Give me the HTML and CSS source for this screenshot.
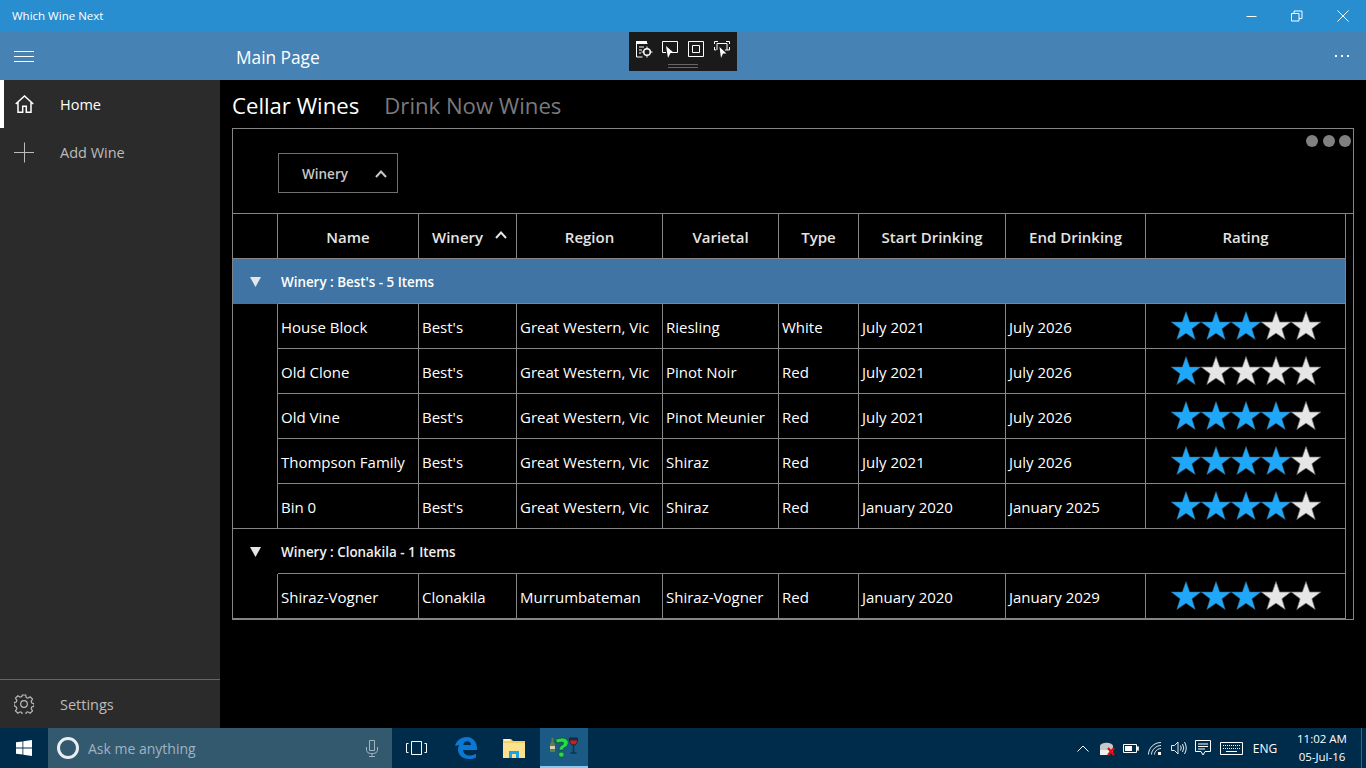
FILE: index.html
```html
<!DOCTYPE html>
<html lang="en">
<head>
<meta charset="utf-8">
<title>Which Wine Next</title>
<link rel="stylesheet" href="styles.css">
</head>
<body>
<svg class="sprite" width="0" height="0" aria-hidden="true">
  <defs>
    <polygon id="star" points="15,0.500 18.700,11 29.800,11 20.900,17.800 24.200,28.500 15,22.200 5.800,28.500 9.100,17.800 0.200,11 11.300,11"/>
    <g id="r1"><use href="#star" class="on"/><use href="#star" class="off" x="30"/><use href="#star" class="off" x="60"/><use href="#star" class="off" x="90"/><use href="#star" class="off" x="120"/></g>
    <g id="r3"><use href="#star" class="on"/><use href="#star" class="on" x="30"/><use href="#star" class="on" x="60"/><use href="#star" class="off" x="90"/><use href="#star" class="off" x="120"/></g>
    <g id="r4"><use href="#star" class="on"/><use href="#star" class="on" x="30"/><use href="#star" class="on" x="60"/><use href="#star" class="on" x="90"/><use href="#star" class="off" x="120"/></g>
  </defs>
</svg>

<div class="titlebar">
  <span class="title">Which Wine Next</span>
  <div class="winctl">
    <span class="wbtn"><svg width="12" height="12" viewBox="0 0 12 12"><path d="M1.500 6.500h10" class="ln"/></svg></span>
    <span class="wbtn"><svg width="12" height="12" viewBox="0 0 12 12"><path d="M.5 3.500h7.500v7.500H.5zM3 3.500V1h8v7.500H8" class="ln"/></svg></span>
    <span class="wbtn"><svg width="12" height="12" viewBox="0 0 12 12"><path d="M.5.5l11 11M11.500.5l-11 11" class="ln"/></svg></span>
  </div>
</div>

<div class="appbar">
  <span class="burger"><svg width="20" height="12" viewBox="0 0 20 12"><path d="M0 1.500h20M0 6.500h20M0 11.500h20" class="ln"/></svg></span>
  <span class="pagetitle">Main Page</span>
  <span class="more"><i></i><i></i><i></i></span>
</div>

<div class="debugbar">
  <div class="dbg-icons">
    <svg width="18" height="18" viewBox="0 0 18 18"><path d="M.5 2.500h11M.5 1v15h6M3 6h5M3 9h3M3 12h2" class="ln"/><path d="M0 0h11v2.500H0z" fill="#fff"/><circle cx="11" cy="11" r="3.300" class="ln w14"/><path d="M11 5.500v3M11 13.500v3M5.500 11h3M13.500 11h3" class="ln"/></svg>
    <svg width="18" height="18" viewBox="0 0 18 18"><path d="M4 11.500H.5V.5h15v11H11" class="ln"/><path d="M4 5l8 7H8.500L6 17z" fill="#fff"/></svg>
    <svg width="18" height="18" viewBox="0 0 18 18"><path d="M.5.5h15v15H.5zM4.500 4.500h7v7h-7z" class="ln"/></svg>
    <svg width="18" height="18" viewBox="0 0 18 18"><path d="M.5 3V.5H4M12 .5h3.500V3M.5 6v3H2M13 9h2.500V6M3 9V2.500h10V9h-2" class="ln"/><path d="M5.500 6l7 6.500H9L7 17z" fill="#fff"/></svg>
  </div>
  <div class="dbg-grip"></div>
</div>

<div class="app">
  <nav class="sidebar">
    <a class="nav-item active">
      <span class="nav-ic"><svg width="19" height="18" viewBox="0 0 19 18"><path d="M.7 9L9.500 1l8.800 8M3 7v10.300h4.700v-6h3.600v6H16V7" class="ln w15"/></svg></span>
      <span>Home</span>
    </a>
    <a class="nav-item dim">
      <span class="nav-ic"><svg width="20" height="21" viewBox="0 0 20 21"><path d="M0 10.500h20M10.500.5v20" class="ln"/></svg></span>
      <span>Add Wine</span>
    </a>
    <a class="nav-item dim settings">
      <span class="nav-ic"><svg width="20" height="20" viewBox="0 0 20 20"><circle cx="10" cy="10" r="3.300" class="ln w12"/><path d="M8.300 1h3.400l.5 2.500 1.700.7 2.200-1.400 2.400 2.400-1.400 2.200.7 1.700 2.200.5v2.800l-2.200.5-.7 1.700 1.400 2.200-2.400 2.400-2.200-1.400-1.700.7-.5 2.300H8.300l-.5-2.300-1.700-.7-2.200 1.400-2.400-2.400 1.400-2.200-.7-1.700L0 11.400V8.600l2.200-.5.7-1.700-1.400-2.200 2.400-2.400 2.200 1.400 1.700-.7z" class="ln w12"/></svg></span>
      <span>Settings</span>
    </a>
  </nav>

  <main class="content">
    <div class="tabs">
      <span class="tab current">Cellar Wines</span>
      <span class="tab">Drink Now Wines</span>
    </div>
    <section class="grid">
      <span class="dots"><i></i><i></i><i></i></span>
      <div class="toolbar">
        <div class="combo"><span>Winery</span><svg width="12" height="8" viewBox="0 0 12 8"><path d="M1 7l5-5.500L11 7" class="ln w2"/></svg></div>
      </div>

      <div class="row head">
        <div class="cell"></div>
        <div class="cell ctr">Name</div>
        <div class="cell sort">Winery<svg width="12" height="8" viewBox="0 0 12 8"><path d="M1 7l5-5.500L11 7" class="ln w2"/></svg></div>
        <div class="cell ctr">Region</div>
        <div class="cell ctr">Varietal</div>
        <div class="cell ctr">Type</div>
        <div class="cell ctr">Start Drinking</div>
        <div class="cell ctr">End Drinking</div>
        <div class="cell ctr">Rating</div>
      </div>

      <div class="group selected">
        <div class="expander"><svg width="11" height="10" viewBox="0 0 11 10"><path d="M0 0h11L5.500 10z"/></svg></div>
        <div class="group-label">Winery : Best's - 5 Items</div>
      </div>
      <div class="row data">
        <div class="cell blank"></div><div class="cell">House Block</div><div class="cell">Best's</div><div class="cell">Great Western, Vic</div><div class="cell">Riesling</div><div class="cell">White</div><div class="cell">July 2021</div><div class="cell">July 2026</div>
        <div class="cell rate"><svg class="stars" viewBox="0 0 150 30"><use href="#r3"/></svg></div>
      </div>
      <div class="row data">
        <div class="cell blank"></div><div class="cell">Old Clone</div><div class="cell">Best's</div><div class="cell">Great Western, Vic</div><div class="cell">Pinot Noir</div><div class="cell">Red</div><div class="cell">July 2021</div><div class="cell">July 2026</div>
        <div class="cell rate"><svg class="stars" viewBox="0 0 150 30"><use href="#r1"/></svg></div>
      </div>
      <div class="row data">
        <div class="cell blank"></div><div class="cell">Old Vine</div><div class="cell">Best's</div><div class="cell">Great Western, Vic</div><div class="cell">Pinot Meunier</div><div class="cell">Red</div><div class="cell">July 2021</div><div class="cell">July 2026</div>
        <div class="cell rate"><svg class="stars" viewBox="0 0 150 30"><use href="#r4"/></svg></div>
      </div>
      <div class="row data">
        <div class="cell blank"></div><div class="cell">Thompson Family</div><div class="cell">Best's</div><div class="cell">Great Western, Vic</div><div class="cell">Shiraz</div><div class="cell">Red</div><div class="cell">July 2021</div><div class="cell">July 2026</div>
        <div class="cell rate"><svg class="stars" viewBox="0 0 150 30"><use href="#r4"/></svg></div>
      </div>
      <div class="row data last">
        <div class="cell blank"></div><div class="cell">Bin 0</div><div class="cell">Best's</div><div class="cell">Great Western, Vic</div><div class="cell">Shiraz</div><div class="cell">Red</div><div class="cell">January 2020</div><div class="cell">January 2025</div>
        <div class="cell rate"><svg class="stars" viewBox="0 0 150 30"><use href="#r4"/></svg></div>
      </div>

      <div class="group">
        <div class="expander"><svg width="11" height="10" viewBox="0 0 11 10"><path d="M0 0h11L5.500 10z"/></svg></div>
        <div class="group-label">Winery : Clonakila - 1 Items</div>
      </div>
      <div class="row data last">
        <div class="cell blank"></div><div class="cell">Shiraz-Vogner</div><div class="cell">Clonakila</div><div class="cell">Murrumbateman</div><div class="cell">Shiraz-Vogner</div><div class="cell">Red</div><div class="cell">January 2020</div><div class="cell">January 2029</div>
        <div class="cell rate"><svg class="stars" viewBox="0 0 150 30"><use href="#r3"/></svg></div>
      </div>
    </section>
  </main>
</div>

<footer class="taskbar">
  <span class="start"><svg width="16" height="16" viewBox="0 0 16 16"><path d="M0 2.300l6.500-.9v6.200H0zM7.300 1.300L16 0v7.600H7.300zM0 8.400h6.500v6.200L0 13.700zM7.300 8.400H16V16l-8.700-1.300z" fill="#fff"/></svg></span>
  <div class="search">
    <span class="cortana"></span>
    <span class="ask">Ask me anything</span>
    <svg class="mic" width="12" height="17" viewBox="0 0 12 17"><path d="M3.500.5h5v10h-5zM.5 7v3.500a4 4 0 0 0 4 3h3a4 4 0 0 0 4-3V7M6 13.500v3M3 16.500h6" fill="none" stroke="#9fb3c1"/></svg>
  </div>
  <span class="tb-app"><svg width="21" height="14" viewBox="0 0 21 14"><path d="M5.500.5h10v13h-10zM2.500 2.500H.5v9h2M18.500 2.500h2v9h-2" class="ln"/></svg></span>
  <span class="tb-app edge"><svg width="22" height="22" viewBox="0 0 22 22"><path d="M0 9C1.500 3.500 6 0 11.500 0 17.500 0 22 4.500 22 11.500v1.500H8c.3 3.500 3 5.500 6.500 5.500 2.500 0 5-.7 6.500-1.800v3.800c-1.800 1.100-4.500 1.500-7 1.500C7.500 22 3 18 3 12.500c0-1.800.5-3.300 1.300-4.500C2.800 8.200 1.200 8.500 0 9zm8.200-1H16c0-2.500-1.500-3.800-3.700-3.800S8.500 5.500 8.200 8z" fill="#0a78d4"/></svg></span>
  <span class="tb-app"><svg width="22" height="20" viewBox="0 0 22 20"><path d="M0 1h8l2 2h12v17H0z" fill="#f3cf65"/><path d="M0 5h22v15H0z" fill="#fbe28f"/><path d="M1 1h6v2H1z" fill="#fff3c2"/><path d="M6 20v-7h10v7h-3v-4H9v4z" fill="#1aa3e8"/></svg></span>
  <span class="tb-app running">
    <svg class="bottle" width="5" height="14" viewBox="0 0 5 14"><path d="M1.500 0h2v4l1.500 2v8H0V6l1.500-2z" fill="#5f7f4a"/><path d="M0 8h5v3H0z" fill="#d5d5b5"/></svg>
    <span class="q">?</span>
    <svg class="glass" width="9" height="17" viewBox="0 0 9 17"><path d="M.5 1h8c0 5-1.500 7-4 7s-4-2-4-7z" fill="#0b3350" stroke="#222"/><path d="M1 3.500h7C8 6 6.500 7.500 4.500 7.500S1 6 1 3.500z" fill="#d01c1c"/><path d="M4.500 8v7M1.500 16h6" stroke="#0b3350" stroke-width="1.500"/></svg>
  </span>
  <div class="tray">
    <span class="ti"><svg width="12" height="7" viewBox="0 0 12 7"><path d="M.5 6.500L6 1l5.500 5.500" class="ln"/></svg></span>
    <span class="ti"><svg width="17" height="15" viewBox="0 0 17 15"><path d="M1 5a6 3 0 0 1 13 0v7H1z" fill="#c8c8c8"/><path d="M1 9h9v5H1z" fill="#f0f0f0"/><path d="M9 7l6 7M15 7l-6 7" stroke="#e01010" stroke-width="2.200"/></svg></span>
    <span class="ti"><svg width="16" height="9" viewBox="0 0 16 9"><path d="M.5.5h13v8H.5zM14 3h2v3h-2z" fill="none" stroke="#fff"/><path d="M2 2h7v5H2z" fill="#fff"/><path d="M14 3h1.500v3H14z" fill="#fff"/></svg></span>
    <span class="ti"><svg width="14" height="13" viewBox="0 0 14 13"><path d="M.5 12.500C.5 6 6 .5 13 .5M3.500 12.500c0-4.500 4.500-9 9.500-9M6.500 12.500c0-3 3-6 6.500-6" fill="none" stroke="#fff" stroke-width=".9"/><path d="M10 10h3v3h-3z" fill="#fff"/></svg></span>
    <span class="ti"><svg width="17" height="14" viewBox="0 0 17 14"><path d="M.5 4.500h3l3.500-3.500v12l-3.500-3.500h-3zM9.500 4.500q1.500 2.500 0 5M11.500 3q2.500 4 0 8M13.500 1q3.500 6 0 12" fill="none" stroke="#fff" stroke-width=".9"/></svg></span>
    <span class="ti"><svg width="16" height="17" viewBox="0 0 16 17"><path d="M.5.5h15v11H10l-2 3.500-2-3.500H.5zM3 4h10M3 6.500h10M3 9h7" fill="none" stroke="#fff"/></svg></span>
    <span class="ti kb"><svg width="23" height="13" viewBox="0 0 23 13"><path d="M.5.500h22v12H.5z" fill="none" stroke="#fff"/><path d="M3 3.500h17M3 6.500h17" stroke="#fff" stroke-dasharray="1 1"/><path d="M6 9.500h11" stroke="#fff"/></svg></span>
    <span class="lang">ENG</span>
    <span class="clock"><span>11:02 AM</span><span>05-Jul-16</span></span>
    <span class="desktop"></span>
  </div>
</footer>
</body>
</html>
```
FILE: styles.css
```css
* { box-sizing: border-box; }
html, body { margin: 0; padding: 0; }
body {
  width: 1366px;
  height: 768px;
  overflow: hidden;
  display: flex;
  flex-direction: column;
  position: relative;
  background: #000;
  color: #fff;
  font-family: "Open Sans", "Noto Sans", sans-serif;
  font-size: 15px;
}
.sprite { position: absolute; }
.ln { fill: none; stroke: currentColor; stroke-width: 1; }
.ln.w12 { stroke-width: 1.2; }
.ln.w14 { stroke-width: 1.4; }
.ln.w15 { stroke-width: 1.5; }
.ln.w2 { stroke-width: 2; }

.titlebar {
  height: 32px;
  flex: none;
  display: flex;
  align-items: center;
  justify-content: space-between;
  padding-left: 12px;
  background: #288ecf;
}
.title { font-size: 11.500px; padding-bottom: 2px; }
.winctl { display: flex; }
.wbtn { width: 46px; height: 32px; display: flex; align-items: center; justify-content: center; }

.appbar {
  height: 48px;
  flex: none;
  display: flex;
  align-items: center;
  background: #4682b4;
}
.burger { width: 48px; display: flex; justify-content: center; }
.pagetitle { margin-left: 188px; padding-top: 2px; font-size: 17.300px; }
.more { margin-left: auto; margin-right: 17px; display: flex; gap: 4px; }
.more i { width: 2px; height: 2px; background: #fff; }

.debugbar {
  position: absolute;
  left: 629px;
  top: 32px;
  width: 108px;
  height: 39px;
  background: #1a1a1a;
}
.dbg-icons { display: flex; gap: 8px; height: 18px; margin: 9px 0 0 7px; }
.dbg-grip { width: 30px; height: 4px; margin: 5px auto 0; border-top: 1px solid #666; border-bottom: 1px solid #666; }

.app { flex: 1; display: flex; min-height: 0; }
.sidebar { width: 220px; flex: none; display: flex; flex-direction: column; background: #2b2b2b; }
.nav-item { height: 48px; display: flex; align-items: center; font-size: 14.500px; color: #fff; }
.nav-item.dim { color: #bcbcbc; }
.nav-item.active { box-shadow: inset 4px 0 0 #fff; }
.nav-ic { width: 48px; margin-right: 12px; display: flex; justify-content: center; }
.settings { margin-top: auto; height: 49px; border-top: 1px solid #666; }

.content { flex: 1; min-width: 0; padding: 0 12px; }
.tabs { height: 48px; display: flex; align-items: center; gap: 25px; padding-top: 2px; }
.tab { font-size: 22.150px; color: #7a7a7a; }
.tab.current { color: #fff; }

.grid { position: relative; height: 492px; border: 1px solid #858585; }
.dots { position: absolute; top: 6px; right: 2px; display: flex; gap: 4.500px; }
.dots i { width: 12px; height: 12px; border-radius: 50%; background: #808080; }
.toolbar { height: 84px; padding: 24px 0 0 45px; }
.combo {
  width: 120px;
  height: 40px;
  display: flex;
  align-items: center;
  justify-content: space-between;
  padding: 1px 10px 0 23px;
  border: 1px solid #707070;
  font-size: 13.500px;
  font-weight: 600;
  color: #c8c8c8;
}

.row {
  display: grid;
  width: 1113px;
  grid-template-columns: 45px 141px 98px 146px 116px 80px 147px 140px 200px;
}
.cell {
  display: flex;
  align-items: center;
  padding-left: 3px;
  border-right: 1px solid #858585;
  white-space: nowrap;
  overflow: hidden;
}
.head { width: auto; height: 46px; border-top: 1px solid #858585; }
.head .cell { border-bottom: 1px solid #858585; font-weight: 600; font-size: 15px; color: #e4e4e4; padding-top: 2px; }
.head .cell.ctr { justify-content: center; padding-left: 0; }
.head .sort { padding-left: 13px; gap: 12px; padding-bottom: 0; }
.head .sort svg { margin-bottom: 4px; }

.data { height: 45px; font-size: 15px; }
.data .cell { border-bottom: 1px solid #858585; padding-top: 2px; }
.data .blank { border-bottom: 0; }
.data.last .blank { border-bottom: 1px solid #858585; }
.data .rate { justify-content: center; padding: 0; }
.stars { width: 150px; height: 30px; }
.on { fill: #1fa8fa; stroke: #3d5f78; stroke-width: .5; }
.off { fill: #e6e6e6; stroke: #6a6a6a; stroke-width: .7; }

.group {
  display: flex;
  width: 1113px;
  height: 45px;
  border-right: 1px solid #858585;
  font-size: 13.400px;
  font-weight: 600;
  color: #f0f0f0;
}
.group.selected { background: #3f74a4; color: #fff; }
.expander { width: 45px; display: flex; align-items: center; justify-content: center; fill: #e6e6e6; }
.group-label { flex: 1; display: flex; align-items: center; padding: 1px 0 0 3px; border-bottom: 1px solid #858585; }

.taskbar { height: 40px; flex: none; display: flex; align-items: stretch; background: #002c4b; color: #fff; }
.start { width: 48px; display: flex; align-items: center; justify-content: center; }
.search { width: 344px; display: flex; align-items: center; padding: 0 12px 0 9px; background: #33596f; }
.cortana { width: 22px; height: 22px; border-radius: 50%; border: 3px solid #e8eef2; }
.ask { margin-left: 9px; font-size: 14px; color: #9fb3c1; }
.mic { margin-left: auto; margin-right: 2px; }
.tb-app { width: 48px; display: flex; align-items: center; justify-content: center; }
.edge { margin-left: 2px; }
.running { margin-left: 2px; background: #1a5a85; border-bottom: 2px solid #8fc8ee; }
.bottle { margin-bottom: 4px; }
.glass { margin-bottom: 3px; }
.q { font-size: 26px; line-height: 1; font-weight: 800; color: #22dd44; -webkit-text-stroke: .5px #0a3a20; }
.tray { margin-left: auto; display: flex; align-items: center; height: 100%; }
.ti { width: 24px; display: flex; justify-content: center; }
.kb { width: 32px; }
.lang { width: 36px; text-align: center; font-size: 12px; }
.clock { width: 78px; display: flex; flex-direction: column; align-items: center; gap: 3px; padding-bottom: 2px; font-size: 11.500px; line-height: 15px; }
.desktop { width: 5px; height: 100%; border-left: 1px solid #3a6685; }
```
